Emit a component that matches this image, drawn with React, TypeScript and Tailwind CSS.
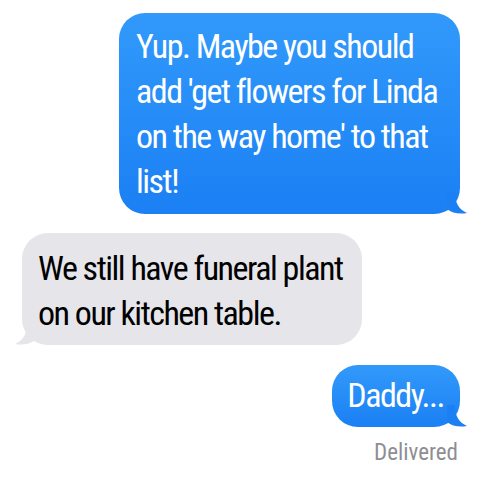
import React from "react";

const font = "font-['Roboto','Liberation_Sans',sans-serif] font-stretch-condensed";

function Tail({ side, color }: { side: "left" | "right"; color: string }) {
  const right = side === "right";
  return (
    <svg
      width="22"
      height="22"
      viewBox="0 0 22 22"
      className={`absolute bottom-0 ${right ? "-right-[7px]" : "-left-[7px] -scale-x-100"}`}
    >
      <path d="M2 0 L10 0 C10 10 13 17 22 21 C14 22.5 7 21 2 17 Z" fill={color} />
    </svg>
  );
}

function Sent({ children, className = "" }: { children: React.ReactNode; className?: string }) {
  return (
    <div className="flex justify-end pr-[20px]">
      <div className={`relative rounded-[26px] bg-gradient-to-b from-[#3299fb] to-[#1a80f4] text-white ${className}`}>
        <Tail side="right" color="#1a80f4" />
        <div className="relative">{children}</div>
      </div>
    </div>
  );
}

const msg = "text-[34px] leading-[45px] tracking-[-1.5px] whitespace-nowrap";

export default function App() {
  return (
    <div className={`w-[480px] h-[480px] bg-white overflow-hidden ${font}`}>
      <div className="flex flex-col pt-[13px]">
        <Sent className="w-[341px] pl-[17px] pr-[14px] pt-[11px] pb-[10px]">
          <p className={msg}>
            Yup. Maybe you should
            <br />
            add 'get flowers for Linda
            <br />
            on the way home' to that
            <br />
            list!
          </p>
        </Sent>

        <div className="flex justify-start pl-[22px] mt-[19px]">
          <div className="relative w-[340px] rounded-[26px] bg-[#e5e5ea] text-black pl-[16px] pr-[12px] pt-[13px] pb-[9px]">
            <Tail side="left" color="#e5e5ea" />
            <p className={`relative ${msg}`}>
              We still have funeral plant
              <br />
              on our kitchen table.
            </p>
          </div>
        </div>

        <div className="mt-[20px]">
          <Sent className="pl-[15px] pr-[16px] pt-[8px] pb-[9px]">
            <p className={msg}>Daddy...</p>
          </Sent>
        </div>

        <div className="flex justify-end pr-[22px] mt-[12px]">
          <span className="text-[23px] leading-[27px] text-[#8e8e93]">Delivered</span>
        </div>
      </div>
    </div>
  );
}
